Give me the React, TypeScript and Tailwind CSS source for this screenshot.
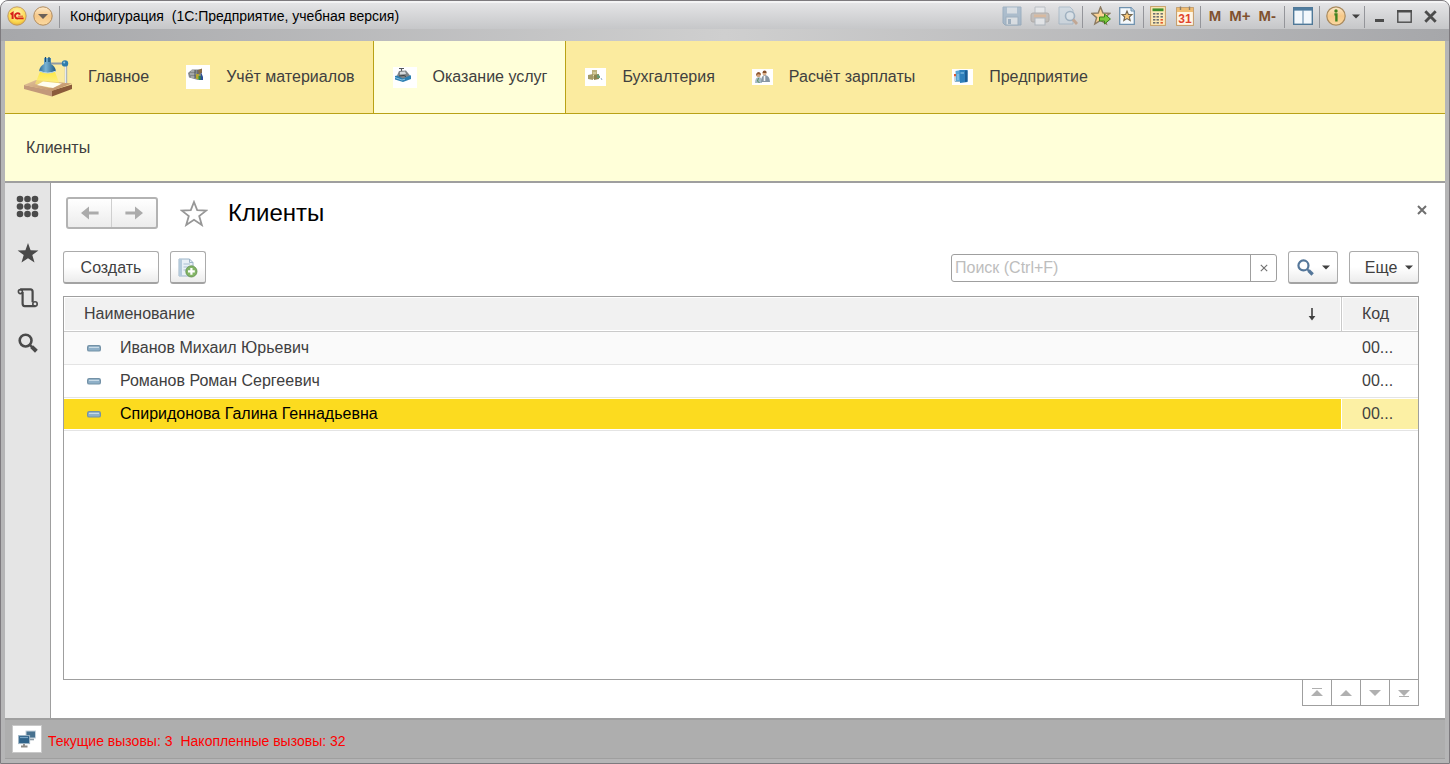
import type { ReactNode } from "react";

function LogoIcon() {
  return (
    <svg width="20" height="20" viewBox="0 0 20 20">
      <defs>
        <radialGradient id="logo" cx="0.5" cy="0.35" r="0.7">
          <stop offset="0" stopColor="#fff8b8" />
          <stop offset="0.7" stopColor="#fbd64b" />
          <stop offset="1" stopColor="#d9a33a" />
        </radialGradient>
      </defs>
      <circle cx="10" cy="10" r="9.2" fill="url(#logo)" stroke="#b98d5a" strokeWidth="0.8" />
      <path d="M3.6 8.4 L5.6 7 V13" fill="none" stroke="#d8201a" strokeWidth="2" />
      <path d="M13 8.6 A2.6 2.6 0 1 0 11 12.4 H16.6" fill="none" stroke="#d8201a" strokeWidth="1.9" />
      <path d="M10.8 10.2 H16" stroke="#d8201a" strokeWidth="0.8" />
    </svg>
  );
}

function MenuCircleIcon() {
  return (
    <svg width="20" height="20" viewBox="0 0 20 20">
      <defs>
        <linearGradient id="menuc" x1="0" y1="0" x2="0" y2="1">
          <stop offset="0" stopColor="#fdeacb" />
          <stop offset="0.5" stopColor="#f6c888" />
          <stop offset="1" stopColor="#fbd9a0" />
        </linearGradient>
      </defs>
      <circle cx="10" cy="10" r="9.2" fill="url(#menuc)" stroke="#b08a5c" strokeWidth="1" />
      <path d="M5 8 H15 L10 13 Z" fill="#6b6058" />
    </svg>
  );
}

function SaveIcon() {
  return (
    <svg width="20" height="20" viewBox="0 0 20 20" opacity="0.6">
      <path d="M1 1 H19 V19 H3 L1 17 Z" fill="#8fabc4" stroke="#7795b0" />
      <rect x="5" y="1.5" width="10" height="6" fill="#d6dfe7" />
      <rect x="4" y="11" width="12" height="8" fill="#dfe6ec" stroke="#7f9ab2" />
      <rect x="6" y="13" width="3" height="5" fill="#7f9ab2" />
    </svg>
  );
}

function PrintIcon() {
  return (
    <svg width="20" height="20" viewBox="0 0 20 20" opacity="0.6">
      <path d="M5 1 H15 V8 H5 Z" fill="#eceff2" stroke="#a2aab2" />
      <rect x="1" y="7" width="18" height="9" rx="2" fill="#b7b0aa" stroke="#98928d" />
      <rect x="4" y="8.5" width="12" height="3" fill="#d9a77c" />
      <rect x="5" y="12" width="10" height="7" fill="#eef1f4" stroke="#9aa5b0" />
    </svg>
  );
}

function PreviewIcon() {
  return (
    <svg width="20" height="20" viewBox="0 0 20 20" opacity="0.55">
      <path d="M1 1 H12 L15 4 V18 H1 Z" fill="#c9d8e4" stroke="#8aa5bb" />
      <circle cx="12" cy="10" r="4.5" fill="#dce8f1" stroke="#7594ae" strokeWidth="1.6" />
      <path d="M15 13.5 L19 18" stroke="#b98763" strokeWidth="2.8" />
    </svg>
  );
}

function StarAddIcon() {
  return (
    <svg width="20" height="20" viewBox="0 0 20 20">
      <path d="M9.5 1 L12 7 L18.8 7.4 L13.6 11.6 L15.4 18 L9.5 14.4 L3.8 18 L5.6 11.6 L0.6 7.4 L7.2 7 Z" fill="#fbd394" stroke="#8b7b63" strokeWidth="1.4" />
      <path d="M8.5 11 H13.5 V8 L19.4 13 L13.5 18 V15 H8.5 Z" fill="#7dc93b" stroke="#3c7f1d" />
    </svg>
  );
}

function DocStarIcon() {
  return (
    <svg width="16" height="18" viewBox="0 0 16 18">
      <path d="M0.7 0.7 H12 L15.3 4 V17.3 H0.7 Z" fill="#f5f9fc" stroke="#6f92af" strokeWidth="1.3" />
      <path d="M12 0.7 V4 H15.3" fill="#c5d8e7" stroke="#6f92af" />
      <path d="M8 4 L9.4 7.4 L13 7.6 L10.3 10 L11.2 13.6 L8 11.6 L4.8 13.6 L5.7 10 L3 7.6 L6.6 7.4 Z" fill="#fbcb7c" stroke="#75674f" strokeWidth="1.1" />
    </svg>
  );
}

function CalculatorIcon() {
  const rows = [7, 10, 13, 16];
  return (
    <svg width="16" height="20" viewBox="0 0 16 20">
      <rect x="0.6" y="0.6" width="14.8" height="18.8" fill="#fdeab8" stroke="#c79f66" />
      <rect x="2.5" y="2.4" width="11" height="2.8" fill="#3e8f2c" />
      {rows.map((y) => (
        <g key={y}>
          <rect x="3" y={y} width="2.4" height="1.6" fill="#6d6f70" />
          <rect x="6.5" y={y} width="2.4" height="1.6" fill="#6d6f70" />
          <rect x="10.5" y={y} width="2.4" height="1.6" fill={y > 12 ? "#e0542e" : "#6d6f70"} />
        </g>
      ))}
    </svg>
  );
}

function CalendarIcon() {
  return (
    <svg width="18" height="20" viewBox="0 0 18 20">
      <rect x="0.6" y="1.6" width="16.8" height="17.8" fill="#fff6e6" stroke="#c29a66" />
      <rect x="1" y="2" width="16" height="4" fill="#f0bd73" />
      <path d="M4.5 0.5 V4 M13.5 0.5 V4" stroke="#8d7c66" strokeWidth="1.4" />
      <text x="9" y="17" textAnchor="middle" fontSize="12" fontWeight="bold" fill="#e2452c" fontFamily="Liberation Sans, sans-serif">31</text>
    </svg>
  );
}

function PanelsIcon() {
  return (
    <svg width="20" height="18" viewBox="0 0 20 18">
      <rect x="0.7" y="0.7" width="18.6" height="16.6" fill="#f3f8fc" stroke="#4f7898" strokeWidth="1.4" />
      <rect x="1" y="1" width="18" height="2.6" fill="#4f7c9f" />
      <path d="M10 3 V17" stroke="#6f93b0" strokeWidth="1.2" />
    </svg>
  );
}

function InfoIcon() {
  return (
    <svg width="20" height="20" viewBox="0 0 20 20">
      <circle cx="10" cy="10" r="9.2" fill="url(#menuc)" stroke="#a98a5e" strokeWidth="1.2" />
      <circle cx="10" cy="5" r="1.7" fill="#3f8220" />
      <path d="M8.4 8.4 H10.4 V15.4" fill="none" stroke="#3f8220" strokeWidth="2.4" />
    </svg>
  );
}

function CaretIcon() {
  return (
    <svg width="8" height="5" viewBox="0 0 8 5">
      <path d="M0 0.5 H8 L4 4.5 Z" fill="#404040" />
    </svg>
  );
}

function DeskLampIcon() {
  return (
    <svg width="48" height="40" viewBox="0 0 48 40">
      <defs>
        <linearGradient id="wood" x1="0" y1="0" x2="1" y2="1">
          <stop offset="0" stopColor="#e2c39c" />
          <stop offset="1" stopColor="#bb8a5f" />
        </linearGradient>
        <linearGradient id="lamp" x1="0" y1="0" x2="1" y2="0">
          <stop offset="0" stopColor="#2b6a94" />
          <stop offset="0.4" stopColor="#79b3d4" />
          <stop offset="1" stopColor="#1c5781" />
        </linearGradient>
        <linearGradient id="light" x1="0" y1="0" x2="0" y2="1">
          <stop offset="0" stopColor="#ffe82e" stopOpacity="0.8" />
          <stop offset="1" stopColor="#fff58a" stopOpacity="0.5" />
        </linearGradient>
      </defs>
      <path d="M0 28 L28 33.5 V39.5 L0 32 Z" fill="#c2997a" />
      <path d="M28 33.5 L48 27.5 V32 L28 39.5 Z" fill="#8b5b3b" />
      <path d="M0 28 L12 23 L48 26.5 L28 34 Z" fill="url(#wood)" />
      <path d="M16 15 H31 L36 28 L25 31 L11 27 Z" fill="url(#light)" />
      <path d="M13 28 L19 24.5 L38 26.5 L29 31 Z" fill="#fffef0" />
      <path d="M26 6.5 H41" stroke="#8f9ba5" strokeWidth="2" />
      <path d="M42 8 V26" stroke="#a7b0b8" strokeWidth="2.4" />
      <path d="M41.6 9 V26" stroke="#eef1f4" strokeWidth="1" />
      <path d="M20 1 H27 V7 Q31 9 32 14 Q24 18 15 14 Q16 9 20 7 Z" fill="url(#lamp)" />
      <path d="M21.5 0 V5 M25 0 V5" stroke="#174c70" strokeWidth="1.2" />
      <path d="M15.5 14 Q24 18 31.8 14" fill="none" stroke="#bcd8e8" />
      <circle cx="41" cy="6.4" r="3.2" fill="#2f7dab" />
      <circle cx="40.2" cy="5.5" r="1" fill="#93c8e2" />
    </svg>
  );
}

function MaterialsIcon() {
  return (
    <svg width="24" height="24" viewBox="0 0 24 24">
      <rect width="24" height="24" fill="#fff" />
      <path d="M2 8 L6 4.5 H15 V13 L12 15 L3 12.5 Z" fill="#85888a" />
      <path d="M5 6 H9 M4 9 H10 M5 12 H9" stroke="#c3c6c7" />
      <path d="M9 5 V13 M12 5 V14" stroke="#4f5356" />
      <path d="M12 5 L16 3.5 V8 L13 9 Z" fill="#8b6d45" />
      <rect x="10" y="9" width="3" height="5" fill="#b7a72d" />
      <rect x="12.5" y="11" width="3" height="4" fill="#2e8a48" />
      <path d="M15 7 L17 12 V15 H14.5 Z" fill="#2c4f94" />
    </svg>
  );
}

function CashRegisterIcon() {
  return (
    <svg width="24" height="21" viewBox="0 0 24 21">
      <rect width="24" height="21" fill="#fff" />
      <path d="M6 1.5 H11 M8.5 1.5 V5" stroke="#55595c" strokeWidth="1.2" />
      <path d="M2 9 L10 7 L18 8.5 V12 L10 15 L2 12.5 Z" fill="#2d7fb0" />
      <path d="M2 10.5 L9 13 L12 12.2" fill="none" stroke="#86c2e2" />
      <path d="M4 8.5 L6 4 L13 3.5 L17 8.5 L10 11.5 Z" fill="#7f8487" />
      <path d="M7 5 L12 4.5 L13 7 L7 7.5 Z" fill="#d5d9db" />
      <path d="M6 9 L11 8.5 L13 9.5" fill="none" stroke="#3c4144" />
    </svg>
  );
}

function AccountingIcon() {
  return (
    <svg width="21" height="18" viewBox="0 0 21 18">
      <rect width="21" height="18" fill="#fff" />
      <path d="M7 2 H12 V11 H7 Z" fill="#bdb27c" />
      <path d="M3 7 L8 6 V12 L3 11 Z" fill="#a39a68" />
      <path d="M8 5 H11 M8 7.5 H11" stroke="#e7dfb0" />
      <path d="M9 7 L14 6 V11 L9 12 Z" fill="#8d8450" />
      <path d="M12 6 L15 8 V10 H12 Z" fill="#679a75" />
      <path d="M16 10 L17 12" stroke="#92acc0" />
    </svg>
  );
}

function PayrollIcon() {
  return (
    <svg width="21" height="16" viewBox="0 0 21 16">
      <rect width="21" height="16" fill="#fff" />
      <path d="M3 14 Q3 8 7 8 Q10 8 10 14 Z" fill="#a7b9c6" />
      <path d="M9 13 Q9 6 13 6 Q18 7 18 13 Z" fill="#8796a4" />
      <circle cx="6.5" cy="6" r="2.2" fill="#d2a37c" />
      <path d="M4 7 Q4 3 7 3 Q9 3.4 9 6 L6 5 Z" fill="#8e5630" />
      <circle cx="12.5" cy="4.4" r="2" fill="#dcb08a" />
      <path d="M10.5 4 Q10.6 1.4 13 1.6 Q14.8 2 14.6 4 Z" fill="#85512e" />
      <path d="M6.5 9 L5.5 12 L7.5 14" fill="none" stroke="#4f8e56" />
      <path d="M12.5 7 V12" stroke="#f3f6f8" strokeWidth="1.6" />
    </svg>
  );
}

function CompanyIcon() {
  return (
    <svg width="21" height="16" viewBox="0 0 21 16">
      <rect width="21" height="16" fill="#fff" />
      <path d="M3.5 2 L9 1 V13 L4 12 Z" fill="#5aa5d3" />
      <path d="M7.5 1 H15.5 V13 L8 14 Z" fill="#2f80bb" />
      <path d="M13 1.5 H15.5 V12.5 L13 13 Z" fill="#1c5d94" />
      <path d="M8.5 4 H12 M6 5 V11" stroke="#9dd0ed" />
      <rect x="2" y="5" width="2" height="2.4" fill="#dc5a31" />
      <path d="M3 8 V12.5 H8" fill="none" stroke="#8cb1c8" />
    </svg>
  );
}

function GridIcon() {
  const pos = [4, 11.5, 19];
  return (
    <svg width="23" height="23" viewBox="0 0 23 23">
      {pos.map((y) => pos.map((x) => <circle key={`${x}-${y}`} cx={x} cy={y} r="3.3" fill="#4a4a4a" />))}
    </svg>
  );
}

function StarIcon() {
  return (
    <svg width="22" height="20" viewBox="0 0 22 20">
      <path d="M11 0 L13.6 7.2 L21.4 7.4 L15.3 12.1 L17.5 19.6 L11 15.2 L4.5 19.6 L6.7 12.1 L0.6 7.4 L8.4 7.2 Z" fill="#4a4a4a" />
    </svg>
  );
}

function HistoryIcon() {
  return (
    <svg width="22" height="20" viewBox="0 0 22 20" fill="none" stroke="#4a4a4a">
      <path d="M3.2 1.4 H13.4 Q15.6 1.4 15.6 3.8 V14.2 M18.6 18.2 H7.8 Q5.6 18 5.6 15.4 V4" strokeWidth="2.2" />
      <circle cx="3.4" cy="3.6" r="2" strokeWidth="1.6" />
      <circle cx="18" cy="16" r="2.2" strokeWidth="1.6" />
    </svg>
  );
}

function SearchIcon({ color, size }: { color: string; size: number }) {
  return (
    <svg width={size} height={size} viewBox="0 0 20 20" fill="none" stroke={color}>
      <circle cx="7.6" cy="7.6" r="5.9" strokeWidth="2.6" />
      <path d="M11.8 11.8 L14 14" strokeWidth="2.4" />
      <path d="M13.6 13.6 L18.4 18.2" strokeWidth="4" />
    </svg>
  );
}

function ArrowIcon({ flip }: { flip?: boolean }) {
  return (
    <svg width="18" height="14" viewBox="0 0 18 14" className={flip ? "rotate-180" : ""}>
      <path d="M0 7 L8 0.5 V5.4 H17.6 V8.6 H8 V13.5 Z" fill="#ababab" />
    </svg>
  );
}

function FavouriteIcon() {
  return (
    <svg width="28" height="27" viewBox="0 0 28 27">
      <path d="M14 2 L17.2 10.2 L26.2 10.6 L19.2 16 L21.8 25 L14 19.8 L6.2 25 L8.8 16 L1.8 10.6 L10.8 10.2 Z" fill="none" stroke="#979797" strokeWidth="1.8" />
    </svg>
  );
}

function CopyIcon() {
  return (
    <svg width="20" height="20" viewBox="0 0 20 20">
      <path d="M1 1 H11.5 L15 4.5 V18 H1 Z" fill="#e9f0f6" stroke="#9cb4c8" />
      <path d="M1 1 H4 V18 H1 Z" fill="#b4cadb" />
      <path d="M11.5 1 V4.5 H15" fill="none" stroke="#9cb4c8" />
      <path d="M5.5 6 H12 M5.5 9 H12 M5.5 12 H9" stroke="#a8bfd1" />
      <circle cx="13.4" cy="13.4" r="5.6" fill="#83b566" stroke="#5f8d49" strokeWidth="0.8" />
      <path d="M13.4 10 V16.8 M10 13.4 H16.8" stroke="#fff" strokeWidth="2.2" />
    </svg>
  );
}

function ItemMark() {
  return (
    <svg width="14" height="7" viewBox="0 0 14 7">
      <rect x="0.6" y="0.6" width="12.8" height="5.4" rx="1.6" fill="#8fb0c8" stroke="#7391a6" strokeWidth="1.2" />
      <path d="M2 2.4 H12" stroke="#c8dae6" strokeWidth="1.2" />
    </svg>
  );
}

function CrossIcon({ size, width, color }: { size: number; width: number; color: string }) {
  return (
    <svg width={size} height={size} viewBox="0 0 10 10">
      <path d="M1 1 L9 9 M9 1 L1 9" stroke={color} strokeWidth={width} />
    </svg>
  );
}

function ServerCallsIcon() {
  return (
    <svg width="18" height="18" viewBox="0 0 18 18">
      <rect x="8" y="1" width="9.5" height="7" fill="#47718f" stroke="#c5d2dc" />
      <path d="M12 9.5 H16" stroke="#8b9aa6" strokeWidth="1.6" />
      <rect x="0.6" y="5.6" width="11" height="8" fill="#2f638a" stroke="#9fb5c5" />
      <path d="M2 7.6 H10" stroke="#7facca" />
      <path d="M6 14 V16 M3 16.5 H9.5" stroke="#8d8a86" strokeWidth="1.8" />
    </svg>
  );
}

function Divider() {
  return <div className="mt-[3px] h-[22px] w-px self-start bg-[#94959a]" />;
}

function TitleButton({ label, children }: { label: string; children: ReactNode }) {
  return (
    <button aria-label={label} className="flex items-center justify-center">
      {children}
    </button>
  );
}

function TitleBar() {
  return (
    <header className="flex h-7 items-center border-t-2 border-[#f4f4f5] bg-linear-to-b from-[#e4e4e6] to-[#c6c7c9] pl-1.5 pr-3">
      <div className="flex h-full items-center gap-1.5">
        <TitleButton label="1С:Предприятие"><LogoIcon /></TitleButton>
        <TitleButton label="Главное меню"><MenuCircleIcon /></TitleButton>
        <Divider />
      </div>
      <h1 className="ml-2.5 flex-1 whitespace-pre text-sm text-black">Конфигурация  (1С:Предприятие, учебная версия)</h1>
      <div className="flex h-full items-center gap-2 text-[15px] font-bold text-[#80512f]">
        <div className="-mr-1 flex gap-2">
          <TitleButton label="Сохранить"><SaveIcon /></TitleButton>
          <TitleButton label="Печать"><PrintIcon /></TitleButton>
          <TitleButton label="Просмотр"><PreviewIcon /></TitleButton>
        </div>
        <Divider />
        <TitleButton label="Добавить в избранное"><StarAddIcon /></TitleButton>
        <TitleButton label="Избранное"><DocStarIcon /></TitleButton>
        <Divider />
        <div className="-mx-0.5 flex items-center gap-2.5">
          <TitleButton label="Калькулятор"><CalculatorIcon /></TitleButton>
          <TitleButton label="Календарь"><CalendarIcon /></TitleButton>
        </div>
        <Divider />
        <button>M</button>
        <button>M+</button>
        <button>M-</button>
        <Divider />
        <div className="-mr-1 flex h-full items-center gap-1.5">
          <TitleButton label="Панели"><PanelsIcon /></TitleButton>
          <Divider />
          <TitleButton label="О программе"><InfoIcon /></TitleButton>
          <TitleButton label="Ещё команды"><CaretIcon /></TitleButton>
        </div>
        <Divider />
        <div className="flex items-center gap-3 pl-0.5">
          <TitleButton label="Свернуть">
            <svg width="10" height="14" viewBox="0 0 10 14"><path d="M0 11.5 H9" stroke="#4c4c4c" strokeWidth="3" /></svg>
          </TitleButton>
          <TitleButton label="Развернуть">
            <svg width="15" height="13" viewBox="0 0 15 13">
              <rect x="0.8" y="0.8" width="13.4" height="11.4" fill="none" stroke="#4c4c4c" strokeWidth="1.4" />
              <path d="M0 1.3 H15" stroke="#4c4c4c" strokeWidth="2.4" />
            </svg>
          </TitleButton>
          <TitleButton label="Закрыть"><CrossIcon size={13} width={2.2} color="#4c4c4c" /></TitleButton>
        </div>
      </div>
    </header>
  );
}

const sections = [
  { name: "Главное", icon: <DeskLampIcon /> },
  { name: "Учёт материалов", icon: <MaterialsIcon /> },
  { name: "Оказание услуг", icon: <CashRegisterIcon />, active: true },
  { name: "Бухгалтерия", icon: <AccountingIcon /> },
  { name: "Расчёт зарплаты", icon: <PayrollIcon /> },
  { name: "Предприятие", icon: <CompanyIcon /> },
];

function SectionBar() {
  return (
    <nav className="flex h-[73px] border-b border-[#b9a216] bg-[#fbeb9f]">
      {sections.map((s) => (
        <a
          key={s.name}
          href="#"
          className={
            s.active
              ? "flex items-center gap-4 border-x border-[#b9a216] bg-[#ffffd9] pl-[19px] pr-[18px]"
              : "flex items-center gap-4 pl-[19px] pr-[18px]"
          }
        >
          {s.icon}
          <span>{s.name}</span>
        </a>
      ))}
    </nav>
  );
}

function SideBar() {
  return (
    <aside className="flex w-[46px] flex-col items-center gap-[25px] border-r border-[#9f9f9f] bg-[#e5e5e5] pt-3">
      <button aria-label="Меню функций"><GridIcon /></button>
      <button aria-label="Избранное"><StarIcon /></button>
      <button aria-label="История"><HistoryIcon /></button>
      <button aria-label="Поиск"><SearchIcon color="#4a4a4a" size={20} /></button>
    </aside>
  );
}

const raised = "flex h-[33px] items-center justify-center rounded-[3px] border border-[#ababab] border-b-2 border-b-[#a3a3a3] bg-linear-to-b from-white from-50% to-[#ececec] pt-px";

function Toolbar() {
  return (
    <div className="mt-[22px] flex items-center">
      <button className={raised + " w-24"}>Создать</button>
      <button aria-label="Скопировать" className={raised + " ml-[11px] w-9"}><CopyIcon /></button>
      <div className="ml-auto flex h-7 w-[326px] rounded-[3px] border border-[#9f9f9f]">
        <input
          aria-label="Поиск"
          placeholder="Поиск (Ctrl+F)"
          className="min-w-0 flex-1 px-[3px] outline-none placeholder:text-[#bdbdbd]"
        />
        <button aria-label="Очистить" className="flex w-[26px] items-center justify-center border-l border-[#9f9f9f]">
          <CrossIcon size={8} width={1.4} color="#707070" />
        </button>
      </div>
      <button aria-label="Найти" className={raised + " ml-[11px] w-[50px] gap-2"}>
        <SearchIcon color="#55779a" size={17} />
        <CaretIcon />
      </button>
      <button className={raised + " ml-[11px] w-[70px] gap-2 pl-2.5"}>
        Еще
        <CaretIcon />
      </button>
    </div>
  );
}

const clients = ["Иванов Михаил Юрьевич", "Романов Роман Сергеевич", "Спиридонова Галина Геннадьевна"];

function ClientTable() {
  return (
    <div className="mt-3 flex-1 border border-[#9f9f9f]">
      <table className="w-full table-fixed border-separate border-spacing-0">
        <thead>
          <tr className="h-[35px] bg-[#f1f1f1] text-left">
            <th className="border-b border-r border-[#cacaca] pl-5 pr-6 font-normal shadow-[inset_0_0_0_1px_#fff]">
              <div className="flex items-center justify-between">
                Наименование
                <svg width="10" height="13" viewBox="0 0 10 13">
                  <path d="M5 0 V10" stroke="#404040" strokeWidth="1.6" />
                  <path d="M1.6 8 H8.4 L5 12.6 Z" fill="#404040" />
                </svg>
              </div>
            </th>
            <th className="w-[76px] border-b border-[#cacaca] pl-5 font-normal shadow-[inset_0_0_0_1px_#fff]">Код</th>
          </tr>
        </thead>
        <tbody>
          {clients.map((name, i) => {
            const selected = i === 2;
            return (
              <tr key={name} className={i === 0 ? "h-[33px] bg-[#fafafa]" : "h-[33px] bg-white"}>
                <td
                  className={
                    selected
                      ? "border-b border-[#e4e4e4] bg-[#fcdb1f] pl-[23px] text-black shadow-[inset_0_1px_#fff,inset_-1px_-1px_#fff]"
                      : "border-b border-[#e4e4e4] pl-[23px]"
                  }
                >
                  <div className="flex items-center gap-[19px]">
                    <ItemMark />
                    {name}
                  </div>
                </td>
                <td
                  className={
                    selected
                      ? "border-b border-[#e4e4e4] bg-[#fcf0a4] pl-5 shadow-[inset_0_1px_#fff,inset_0_-1px_#fff]"
                      : "border-b border-[#e4e4e4] pl-5"
                  }
                >
                  00...
                </td>
              </tr>
            );
          })}
        </tbody>
      </table>
    </div>
  );
}

const pagers = [
  { label: "В начало", d: "M6 3 L12 9 H0 Z M1 1 H11 V2 H1 Z" },
  { label: "Вверх", d: "M6 3 L12 9 H0 Z" },
  { label: "Вниз", d: "M0 3 H12 L6 9 Z" },
  { label: "В конец", d: "M0 3 H12 L6 9 Z M1 9 H11 V10 H1 Z" },
];

function Pager() {
  return (
    <div className="flex self-end border-l border-[#9f9f9f]">
      {pagers.map((p) => (
        <button key={p.label} aria-label={p.label} className="flex h-[26px] w-[29px] items-center justify-center border-b border-r border-[#9f9f9f]">
          <svg width="12" height="12" viewBox="0 0 12 12"><path d={p.d} fill="#b0b0b0" /></svg>
        </button>
      ))}
    </div>
  );
}

export default function App() {
  return (
    <div className="bg-white font-['Liberation_Sans',Arial,sans-serif] text-base leading-5 text-[#404040]">
      <div className="flex min-h-screen flex-col overflow-hidden rounded-t-lg border border-[#7d7a7e] bg-[#b5b5b6]">
        <TitleBar />
        <div className="h-3 bg-linear-to-r from-[#a6a7aa] via-[#cfcfcf] to-[#a6a7aa]" />
        <div className="mx-1 flex flex-1 flex-col">
          <SectionBar />
          <div className="flex h-[69px] items-center border-b-2 border-[#9f9f9f] bg-[#ffffd9] px-[21px]">
            <a href="#">Клиенты</a>
          </div>
          <div className="flex flex-1">
            <SideBar />
            <main className="flex flex-1 flex-col bg-white pb-3 pl-3 pr-[26px] pt-3.5">
              <div className="flex h-8 items-center">
                <div className="ml-[3px] flex h-8 rounded-[3px] border-2 border-[#b3b3b3] bg-linear-to-b from-white to-[#ececec]">
                  <button aria-label="Назад" className="flex w-11 items-center justify-center border-r border-[#cfcfcf]"><ArrowIcon /></button>
                  <button aria-label="Вперёд" className="flex w-11 items-center justify-center"><ArrowIcon flip /></button>
                </div>
                <button aria-label="В избранное" className="ml-[22px]"><FavouriteIcon /></button>
                <h2 className="ml-5 text-2xl text-black">Клиенты</h2>
                <button aria-label="Закрыть форму" className="-mr-2 ml-auto self-start pt-2"><CrossIcon size={10} width={2} color="#6f6f6f" /></button>
              </div>
              <Toolbar />
              <ClientTable />
              <Pager />
            </main>
          </div>
        </div>
        <footer className="mx-1 mb-1 flex h-[41px] items-center gap-1.5 border-b border-t-2 border-[#9f9f9f] bg-[#aeaeae] pl-[7px] text-sm text-[#ff0000]">
          <button aria-label="Показатели производительности" className="flex h-7 w-[30px] items-center justify-center border border-[#c9c9c9] bg-white">
            <ServerCallsIcon />
          </button>
          <p className="flex gap-2 pt-1">
            <span>Текущие вызовы: 3</span>
            <span>Накопленные вызовы: 32</span>
          </p>
        </footer>
      </div>
    </div>
  );
}
